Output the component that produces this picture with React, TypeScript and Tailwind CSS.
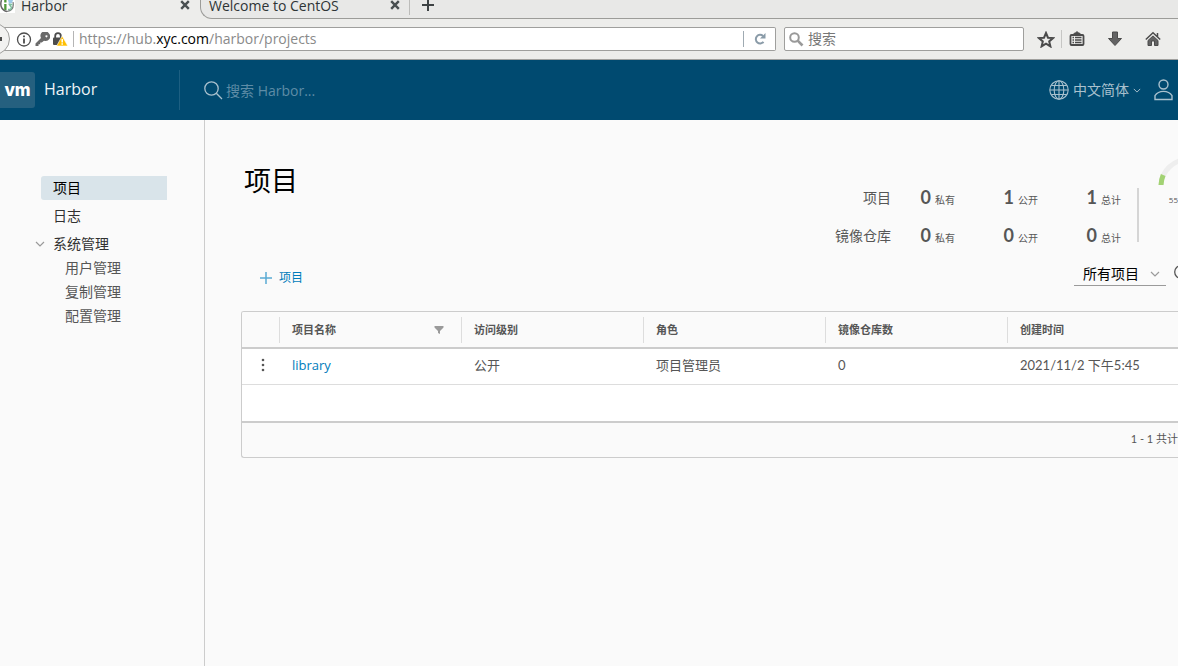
import { useState } from "react";
import type { ReactNode } from "react";

const stats = [
    { label: "项目", values: [[0, "私有"], [1, "公开"], [1, "总计"]] },
    { label: "镜像仓库", values: [[0, "私有"], [0, "公开"], [0, "总计"]] },
];

const adminLinks = ["用户管理", "复制管理", "配置管理"];

const projects = [
    { name: "library", access: "公开", role: "项目管理员", repos: 0, created: "2021/11/2 下午5:45" },
];

function CloseIcon() {
    return (
        <svg width="10" height="10" viewBox="0 0 10 10" fill="none" stroke="#4a5052" strokeWidth="2.4">
            <path d="M1.2 1.2l7.6 7.6M8.8 1.2l-7.6 7.6" />
        </svg>
    );
}

function ChevronDown({ className }: { className: string }) {
    return (
        <svg className={className} viewBox="0 0 10 6" fill="none" stroke="currentColor" strokeWidth="1.2">
            <path d="M1 1l4 4 4-4" />
        </svg>
    );
}

function BrowserTabs() {
    return (
        <div className="flex h-[19px] bg-[#ededeb] text-[14px] leading-[11px] text-[#2e3436]">
            <div className="w-[200px] flex items-start">
                <svg className="w-[15px] h-[13px] shrink-0" viewBox="0 0 15 13">
                    <rect width="15" height="13" fill="#fff" />
                    <path d="M1.500 0C-.5 6 2 10.500 7 11.500" fill="none" stroke="#666" strokeWidth="1.500" />
                    <path d="M13 2c1 5-1 8.500-6 9.500" fill="none" stroke="#777" strokeWidth="1.200" />
                    <path d="M8 0h5l-1 3-3 1z" fill="#9cc9e6" />
                    <path d="M4.200 4h2.300v6H4.200zM4.200 0h2.300v2.500H4.200z" fill="#4f9a3a" />
                    <path d="M12.500 4.500H9.500l2 3-1 2H8" fill="none" stroke="#7fc0a0" strokeWidth="1.500" />
                </svg>
                <span className="flex-1 ml-1.5">Harbor</span>
                <button aria-label="关闭 Harbor" className="mr-[10px]"><CloseIcon /></button>
            </div>
            <div className="flex-1 flex items-start bg-[#e8e8e7] border-l border-b border-[#9c9c99] rounded-bl-xl">
                <div className="w-[209px] h-[15px] flex items-start border-r border-[#bcbcba]">
                    <span className="flex-1 ml-2">Welcome to CentOS</span>
                    <button aria-label="关闭 CentOS" className="mr-[9px]"><CloseIcon /></button>
                </div>
                <button aria-label="新标签页" className="ml-3">
                    <svg width="12" height="12" viewBox="0 0 12 12" stroke="#3d4244" strokeWidth="2">
                        <path d="M6 0v11M0 5h12" />
                    </svg>
                </button>
            </div>
        </div>
    );
}

function ToolButton({ label, children }: { label: string; children: ReactNode }) {
    return (
        <button aria-label={label} className="w-[38px] h-6 flex items-center justify-center">
            {children}
        </button>
    );
}

function BrowserToolbar() {
    return (
        <div className="relative flex items-center h-[41px] bg-[#ededeb] border-b border-[#a0a09e]">
            <div className="flex-1 flex items-center h-6 bg-white border border-l-0 border-[#9f9f9d] rounded-r-xs pl-4">
                <svg width="16" height="15" viewBox="0 0 16 15" fill="none" stroke="#4c4c4c">
                    <circle cx="8" cy="7.500" r="6.500" strokeWidth="1.3" />
                    <path d="M8 6.500v5M8 3.500v1.800" strokeWidth="1.8" />
                </svg>
                <svg className="ml-[3px]" width="15" height="15" viewBox="0 0 15 15" fill="#6a6a6a">
                    <path fillRule="evenodd" d="M14 1.500A4.500 4.500 0 0 0 6 6L.5 11.500V14h3v-1.800h1.700v-1.700h1.600L9 8.700A4.500 4.500 0 0 0 14 1.500zM11.500 3.200a1 1 0 1 1-.1 0z" />
                </svg>
                <svg className="ml-[3px]" width="15" height="15" viewBox="0 0 15 15">
                    <path d="M2.200 6V4a2.800 2.800 0 0 1 5.600 0v2" fill="none" stroke="#4c4c4c" strokeWidth="1.800" />
                    <rect x="0" y="5.500" width="9" height="7.500" rx="1" fill="#4c4c4c" />
                    <path d="M9.200 4L14.800 14H3.600z" fill="#ffbf00" stroke="#fff" strokeWidth=".6" />
                    <path d="M9.200 7v3.500M9.200 11.300v1.500" stroke="#fff" strokeWidth="1.500" />
                </svg>
                <span className="w-px h-4 bg-[#b5b5b5] ml-[5px]" />
                <div
                    role="textbox"
                    aria-label="地址"
                    contentEditable
                    suppressContentEditableWarning
                    className="flex-1 ml-[5px] text-[14px] leading-5 text-[#8a8a8a] whitespace-nowrap outline-none"
                >
                    https://hub.<span className="text-black">xyc.com</span>/harbor/projects
                </div>
                <button aria-label="刷新" className="w-8 h-4 flex items-center justify-center border-l border-[#9faab2]">
                    <svg width="12" height="12" viewBox="0 0 12 12" fill="none">
                        <path d="M9.500 8.800A4.300 4.300 0 1 1 9 2.900" stroke="#8a9ba8" strokeWidth="2" />
                        <path d="M11.500 0v5.500H6z" fill="#8a9ba8" />
                    </svg>
                </button>
            </div>

            <label className="w-[240px] flex items-center h-6 ml-2 pl-1 bg-white border border-[#9f9f9d] rounded-xs">
                <svg width="15" height="15" viewBox="0 0 15 15" fill="none" stroke="#999">
                    <circle cx="5.500" cy="5.500" r="4.300" strokeWidth="2" />
                    <path d="M8.700 8.700l4.800 4.800" strokeWidth="2.600" />
                </svg>
                <input aria-label="浏览器搜索" placeholder="搜索" className="flex-1 min-w-0 ml-1 pb-0.5 text-[14px] outline-none placeholder:text-[#777]" />
            </label>

            <div className="flex items-center pl-[11px] pr-[6px]">
                <button aria-label="收藏" className="w-[22px] flex justify-center">
                    <svg width="18" height="17" viewBox="0 0 18 17" fill="none" stroke="#4b4b4b" strokeWidth="2">
                        <path d="M9 2l2 4.700 5 .4-3.800 3.300 1.200 5L9 12.700l-4.400 2.700 1.200-5L2 7.100l5-.4z" />
                    </svg>
                </button>
                <span className="w-px h-[18px] bg-[#c6c6c4] ml-1 -mr-1" />
                <ToolButton label="书签">
                    <svg width="16" height="16" viewBox="0 0 16 16" fill="none" stroke="#4b4b4b">
                        <rect x="1.500" y="4" width="13" height="10" rx="1" strokeWidth="1.800" />
                        <path d="M4 4l1.500-2h1L8 .5 9.500 2h1L12 4z" fill="#4b4b4b" />
                        <path d="M3.500 6.500h1.500M3.500 9h1.500M3.500 11.500h1.500M6 6.500h6.500M6 9h6.500M6 11.500h6.500" strokeWidth="1.300" />
                    </svg>
                </ToolButton>
                <ToolButton label="下载">
                    <svg width="16" height="16" viewBox="0 0 16 16" fill="#636363" stroke="#4b4b4b">
                        <path d="M5.500 1h5v6.500h4L8 14.500 1.500 7.500h4z" />
                    </svg>
                </ToolButton>
                <ToolButton label="主页">
                    <svg width="16" height="16" viewBox="0 0 16 16" fill="none" stroke="#4b4b4b">
                        <path d="M.8 8.500L8 1.700l7.200 6.800M12.500 2v4" strokeWidth="1.500" />
                        <path d="M3 9.500l5-4.600 5 4.600v5H9.500V10h-3v4.500H3z" fill="#636363" />
                    </svg>
                </ToolButton>
            </div>

            <button aria-label="后退" className="absolute -left-[22px] top-[4px] w-8 h-8 rounded-full bg-[#f2f2f1] border border-[#9f9f9d] flex items-center justify-end pr-[7px]">
                <span className="w-1 h-1 bg-[#4b4b4b]" />
            </button>
        </div>
    );
}

function HarborHeader() {
    return (
        <header className="flex items-center h-15 bg-[#004a70] text-[#a9c1ce]">
            <a href="#" className="flex items-center w-[179px] text-[#eef4f7]">
                <span className="w-[35px] h-9 flex items-center justify-center bg-[#25607f] rounded-r-[3px] text-white text-[17px] leading-5 font-[Inter,sans-serif] font-extrabold">vm</span>
                <span className="ml-[9px] pb-0.5 text-[16px] leading-6">Harbor</span>
            </a>
            <label className="flex-1 flex items-center h-10 pl-6 border-l border-[#1d5f82]">
                <svg width="19" height="19" viewBox="0 0 19 19" fill="none" stroke="#a9c1ce" strokeWidth="1.300">
                    <circle cx="7.500" cy="7.500" r="6.700" />
                    <path d="M12.300 12.300l5.700 5.700" />
                </svg>
                <input aria-label="搜索 Harbor" placeholder="搜索 Harbor..." className="flex-1 ml-[3px] text-[14px] outline-none placeholder:text-[#5e8ca6]" />
            </label>
            <button className="flex items-center text-[14px]">
                <svg width="20" height="20" viewBox="0 0 20 20" fill="none" stroke="currentColor" strokeWidth="1.100">
                    <circle cx="10" cy="10" r="9.200" />
                    <ellipse cx="10" cy="10" rx="4.800" ry="9.200" />
                    <path d="M10 1v18M1 10h18M2.500 5.500h15M2.500 14.500h15" />
                </svg>
                <span className="ml-1 pb-0.5">中文简体</span>
                <ChevronDown className="w-2 h-[5px] ml-1" />
            </button>
            <button aria-label="用户" className="ml-[13px] mr-[5px]">
                <svg width="19" height="22" viewBox="0 0 19 22" fill="none" stroke="currentColor" strokeWidth="1.400">
                    <circle cx="9.500" cy="5.500" r="4.500" />
                    <path d="M1 20.500v-3.800c1.800-2.800 4.600-4.300 8.500-4.300s6.700 1.500 8.500 4.300v3.800z" />
                </svg>
            </button>
        </header>
    );
}

function Sidebar() {
    return (
        <nav className="w-[205px] shrink-0 border-r border-[#ccc] pt-14 pl-[41px] pr-[37px] text-[14px] leading-6 text-[#313131]">
            <a href="#" className="block pl-3 bg-[#d9e4ea] rounded-l-[3px] text-black">项目</a>
            <a href="#" className="block pl-3 mt-1">日志</a>
            <button className="flex items-center mt-1 -ml-1.5">
                <ChevronDown className="w-[10px] h-[6px] text-[#9a9a9a]" />
                <span className="ml-2">系统管理</span>
            </button>
            {adminLinks.map((name) => (
                <a key={name} href="#" className="block pl-6 text-[#565656]">{name}</a>
            ))}
        </nav>
    );
}

// only the left edge of the storage gauge fits in the window
function StorageGauge() {
    return (
        <div className="w-[39px] flex flex-col items-end pt-[37px] text-[#565656]">
            <svg className="w-5 h-[30px] shrink-0" viewBox="0 0 20 30" fill="none" strokeWidth="5">
                <path d="M3 28A27 27 0 0 1 30 2.500" stroke="#eee" />
                <path d="M3 28A27 27 0 0 1 5.200 18" stroke="#a2d273" />
            </svg>
            <span className="mt-[7px] text-[8px] leading-3">55</span>
        </div>
    );
}

function Statistics() {
    return (
        <div className="flex items-start">
            <div className="pt-[58px] text-[#565656]">
                {stats.map((row) => (
                    <div key={row.label} className="flex items-center justify-end h-[38px]">
                        <span className="text-[14px] leading-5 pt-0.5">{row.label}</span>
                        {row.values.map(([value, name], i) => (
                            <span key={name} className={i === 0 ? "w-16 flex items-baseline justify-end gap-1" : "w-[83px] flex items-baseline justify-end gap-1"}>
                                <span className="font-[Lato,sans-serif] font-bold text-[18px] leading-5">{value}</span>
                                <span className="text-[10px]">{name}</span>
                            </span>
                        ))}
                    </div>
                ))}
            </div>
            <span className="w-0.5 h-[54px] mt-[68px] ml-4 bg-[#d5d5d5]" />
            <StorageGauge />
        </div>
    );
}

function ProjectTable() {
    const head = "p-0 h-[37px] border-b-2 border-[#ccc]";
    const headInner = "flex items-center justify-between h-[26px] pl-3 pr-[17px] border-l border-[#ddd]";
    return (
        <div className="mt-6 border border-r-0 border-[#ccc] rounded-l-[3px] overflow-hidden text-[#565656]">
            <table className="w-full table-fixed border-separate border-spacing-0 text-left text-[13px] leading-5 bg-white">
                <thead className="bg-[#fafafa] text-[11px]">
                    <tr>
                        <th className={head + " w-[37px]"} aria-label="操作"></th>
                        <th className={head + " w-[182px]"}>
                            <div className={headInner}>
                                项目名称
                                <button aria-label="筛选">
                                    <svg width="10" height="8" viewBox="0 0 10 8" fill="#9a9a9a"><path d="M.5 0h9v1.500L6 5v3L4 7V5L.5 1.500z" /></svg>
                                </button>
                            </div>
                        </th>
                        <th className={head + " w-[182px]"}><div className={headInner}>访问级别</div></th>
                        <th className={head + " w-[182px]"}><div className={headInner}>角色</div></th>
                        <th className={head + " w-[182px]"}><div className={headInner}>镜像仓库数</div></th>
                        <th className={head}><div className={headInner}>创建时间</div></th>
                    </tr>
                </thead>
                <tbody className="[&_td]:border-b [&_td]:border-[#ddd] [&_td]:h-9 [&_td]:pt-0 [&_td]:pb-[3px] [&_td]:pr-0 [&_td]:pl-[13px] [&_td]:whitespace-nowrap">
                    {projects.map((project) => (
                        <tr key={project.name}>
                            <td>
                                <button aria-label="更多操作" className="flex w-[15px] justify-center">
                                    <svg width="4" height="14" viewBox="0 0 4 14" fill="#565656">
                                        <circle cx="2" cy="2" r="1.300" />
                                        <circle cx="2" cy="7" r="1.300" />
                                        <circle cx="2" cy="12" r="1.300" />
                                    </svg>
                                </button>
                            </td>
                            <td><a href="#" className="text-[#007cbb]">{project.name}</a></td>
                            <td>{project.access}</td>
                            <td>{project.role}</td>
                            <td className="font-[Lato,'Noto_Sans_CJK_SC',sans-serif]">{project.repos}</td>
                            <td className="font-[Lato,'Noto_Sans_CJK_SC',sans-serif]">{project.created}</td>
                        </tr>
                    ))}
                </tbody>
            </table>
            <div className="h-9 bg-white" />
            <div className="h-9 flex items-center justify-end pb-0.5 border-t-2 border-[#ccc] text-[11px] font-[Lato,'Noto_Sans_CJK_SC',sans-serif]">1 - 1 共计</div>
        </div>
    );
}

export default function App() {
    const [filter, setFilter] = useState("all");

    return (
        <div className="min-h-screen flex flex-col overflow-hidden bg-[#fafafa] font-['Open_Sans','Noto_Sans_CJK_SC',sans-serif]">
            <BrowserTabs />
            <BrowserToolbar />
            <HarborHeader />
            <div className="flex-1 flex">
                <Sidebar />
                <main className="flex-1 min-w-0 pl-9">
                    <div className="flex justify-between">
                        <h1 className="pt-[41px] pl-[3px] text-[27px] leading-10 text-black">项目</h1>
                        <Statistics />
                    </div>
                    <div className="flex items-start justify-between pt-2">
                        <button className="flex items-center gap-[7px] pt-[7px] pl-[19px] text-[12px] leading-[18px] text-[#007cbb]">
                            <svg width="12" height="12" viewBox="0 0 12 12" stroke="#5aaad3" strokeWidth="1.500"><path d="M6 0v12M0 6h12" /></svg>
                            项目
                        </button>
                        <div className="flex items-center">
                            <div className="relative">
                                <select
                                    aria-label="项目筛选"
                                    value={filter}
                                    onChange={(e) => setFilter(e.target.value)}
                                    className="block appearance-none w-[92px] h-6 pl-[9px] text-[14px] text-black border-b border-[#9a9a9a]"
                                >
                                    <option value="all">所有项目</option>
                                </select>
                                <ChevronDown className="absolute right-1.5 top-[9px] w-[10px] h-[6px] text-[#9a9a9a] pointer-events-none" />
                            </div>
                            <button aria-label="刷新列表" className="w-1 ml-2 pb-1">
                                <svg width="4" height="14" viewBox="0 0 4 14" fill="none" stroke="#565656" strokeWidth="1.300"><circle cx="7" cy="7" r="6.300" /></svg>
                            </button>
                        </div>
                    </div>
                    <ProjectTable />
                </main>
            </div>
        </div>
    );
}
